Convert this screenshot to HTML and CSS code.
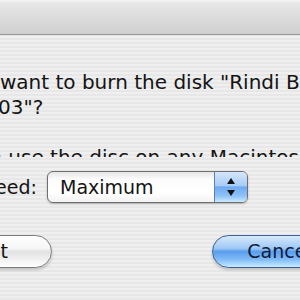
FILE: index.html
```html
<!DOCTYPE html>
<html>
<head>
    <title>Burn Disc</title>
    <link rel="stylesheet" href="styles.css">
</head>
<body>
    <div class="toolbar"></div>
    <div class="sheet">
        <p class="message">
            <span class="line first">want to burn the disk "Rindi Ba</span>
            <span class="line second">03"?</span>
        </p>
        <div class="note">
            <p>can use the disc on any Macintosh</p>
        </div>
        <div class="speed-row">
            <label class="speed-label" for="speed">eed:</label>
            <div class="popup" id="speed">
                <span class="popup-value">Maximum</span>
                <span class="popup-arrows">
                    <svg width="12" height="30" viewBox="0 0 12 30">
                        <polygon points="6,6 2,12 10,12" fill="#111"/>
                        <polygon points="2,18 10,18 6,24" fill="#111"/>
                    </svg>
                </span>
            </div>
        </div>
        <div class="buttons">
            <button class="btn eject">Eject</button>
            <button class="btn default">Cancel</button>
        </div>
    </div>
</body>
</html>
```

FILE: styles.css
```css
html, body {
    margin: 0;
}
body {
    width: 300px;
    height: 300px;
    overflow: hidden;
    font-family: "DejaVu Sans", sans-serif;
    color: #141414;
    background: repeating-linear-gradient(to bottom, #efefef 0, #efefef 2px, #e7e7e7 2px, #e7e7e7 4px);
}
.toolbar {
    height: 34px;
    border-bottom: 1px solid #949494;
    background: linear-gradient(#f3f3f3, #e6e6e6 12%, #cfcfcf);
}
.message {
    margin: 35px 0 0;
    font-size: 20px;
    line-height: 25px;
    white-space: nowrap;
}
.line {
    display: block;
}
.second {
    margin-left: -2px;
}
.note {
    height: 12px;
    margin-top: 25px;
    overflow: hidden;
}
.note p {
    margin: 0 0 0 -34px;
    font-size: 20px;
    line-height: 24px;
    white-space: nowrap;
}
.speed-row {
    display: flex;
    align-items: center;
    height: 32px;
    margin-top: 14px;
}
.speed-label {
    flex: 0 0 52px;
    margin-left: -5px;
    font-size: 19px;
    line-height: 32px;
}
.popup {
    display: flex;
    width: 201px;
    height: 32px;
    box-sizing: border-box;
    border: 1px solid #6e6e6e;
    border-radius: 6px;
    overflow: hidden;
    background: linear-gradient(#e6e6e6, #fcfcfc 25%, #fff 70%, #f2f2f2);
    box-shadow: 0 1px 2px rgba(0, 0, 0, 0.25);
}
.popup-value {
    flex: 1;
    padding-left: 12px;
    font-size: 19px;
    line-height: 30px;
}
.popup-arrows {
    display: flex;
    align-items: center;
    justify-content: center;
    width: 32px;
    border-left: 1px solid #5f7fb3;
    background: linear-gradient(#d3e6fb, #a9cdf6 45%, #6faaf0 50%, #8fc3f8 80%, #cdeafd);
}
.buttons {
    display: flex;
    gap: 160px;
    margin-top: 32px;
}
.btn {
    flex: 0 0 135px;
    height: 33px;
    padding: 0;
    border-radius: 17px;
    font-family: "DejaVu Sans", sans-serif;
    font-size: 19px;
    line-height: 31px;
    text-align: center;
    box-shadow: 0 2px 3px rgba(0, 0, 0, 0.2);
}
.eject {
    margin-left: -83px;
    color: #111;
    border: 1px solid #7c7c7c;
    background: linear-gradient(#fefefe, #f6f6f6 40%, #e2e2e2 50%, #f3f3f3 80%, #fff);
}
.default {
    color: #0f1b3b;
    border: 1px solid #3f5e93;
    background: linear-gradient(#d7e9fc, #9dc8f5 40%, #5b9ded 50%, #7fbaf6 75%, #c6ecff);
}
```
